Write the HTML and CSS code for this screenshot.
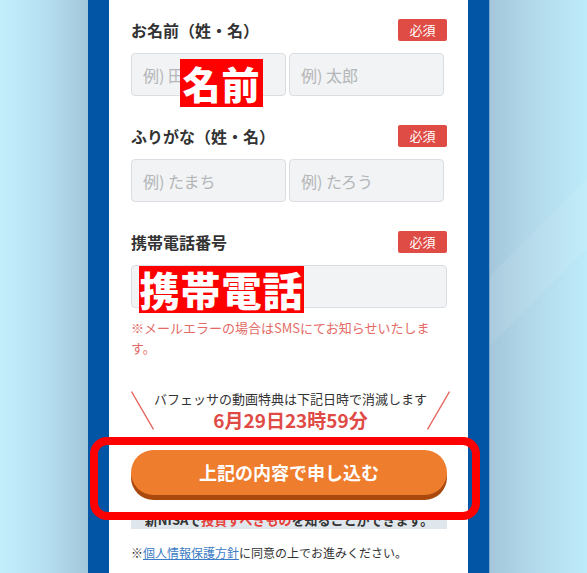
FILE: index.html
```html
<!DOCTYPE html>
<html lang="ja">
<head>
<meta charset="utf-8">
<title>申し込みフォーム</title>
<link rel="stylesheet" href="styles.css">
</head>
<body>
<div class="page">
  <main class="card">
    <div class="field">
      <div class="field-head"><span class="label">お名前（姓・名）</span><span class="badge">必須</span></div>
      <div class="name-row">
        <input class="input" type="text" placeholder="例) 田中">
        <input class="input" type="text" placeholder="例) 太郎">
        <span class="stamp stamp-name">名前</span>
      </div>
    </div>
    <div class="field">
      <div class="field-head"><span class="label">ふりがな（姓・名）</span><span class="badge">必須</span></div>
      <div class="name-row">
        <input class="input" type="text" placeholder="例) たまち">
        <input class="input" type="text" placeholder="例) たろう">
      </div>
    </div>
    <div class="field field-last">
      <div class="field-head"><span class="label">携帯電話番号</span><span class="badge">必須</span></div>
      <div class="phone-row">
        <input class="input input-full" type="tel">
        <span class="stamp stamp-phone">携帯電話</span>
      </div>
      <p class="note">※メールエラーの場合はSMSにてお知らせいたします。</p>
    </div>

    <div class="deadline">
      <svg class="slash" width="23" height="39" viewBox="0 0 23 39"><line x1="0.5" y1="0.5" x2="22.5" y2="38.5" stroke="#e4605a" stroke-width="1.3"/></svg>
      <div class="deadline-text">
        <p class="deadline-note">バフェッサの動画特典は下記日時で消滅します</p>
        <p class="deadline-date">6月29日23時59分</p>
      </div>
      <svg class="slash" width="23" height="39" viewBox="0 0 23 39"><line x1="22.5" y1="0.5" x2="0.5" y2="38.5" stroke="#e4605a" stroke-width="1.3"/></svg>
    </div>

    <div class="submit-wrap">
      <button class="submit" type="button">上記の内容で申し込む</button>
      <span class="annot"></span>
    </div>

    <p class="marker">新NISAで<span class="marker-red">投資すべきもの</span>を知ることができます。</p>

    <p class="privacy">※<a class="privacy-link" href="#">個人情報保護方針</a>に同意の上でお進みください。</p>
  </main>
</div>
</body>
</html>
```

FILE: styles.css
```css
* { box-sizing: border-box; }

html, body { height: 100%; }

body {
  margin: 0;
  overflow: hidden;
  font-family: "Noto Sans CJK JP", "Noto Sans", sans-serif;
  color: #333;
  background:
    linear-gradient(135deg, rgba(255,255,255,0) 0 66%, rgba(255,255,255,0.08) 66% 72%, rgba(255,255,255,0) 72%),
    linear-gradient(90deg, #c2eefc 0, #b6e0f2 45px, #a3c6da 88px, #a3c6da 489px, #b0d6e8 525px, #bdebfa 587px);
}

.page {
  display: flex;
  padding-left: 88px;
  min-height: 100%;
}

.card {
  width: 401px;
  min-height: 573px;
  background: #fff;
  border-left: 21px solid #0254a4;
  border-right: 21px solid #0254a4;
  box-shadow: 1px 0 0 #7fa9cf;
  padding: 19px 21px 30px 22px;
}

.field { margin-bottom: 29px; }
.field-last { margin-bottom: 0; }

.field-head {
  display: flex;
  justify-content: space-between;
  align-items: center;
  height: 22px;
  margin-bottom: 12px;
}

.label {
  font-size: 16px;
  font-weight: 700;
  line-height: 22px;
  color: #333;
}

.badge {
  width: 49px;
  height: 22px;
  line-height: 22px;
  text-align: center;
  font-size: 13px;
  color: #fff;
  background: #df4b45;
  border-radius: 2px;
}

.name-row {
  position: relative;
  display: grid;
  grid-template-columns: 155px 155px;
  gap: 3px;
}

.phone-row { position: relative; }

.input {
  display: block;
  width: 100%;
  height: 43px;
  margin: 0;
  padding: 0 11px;
  font-family: "Noto Sans CJK JP", "Noto Sans", sans-serif;
  font-size: 16px;
  color: #333;
  background: #f1f3f5;
  border: 1px solid #dadee2;
  border-radius: 4px;
  outline: none;
}

.input::placeholder { color: #b4b6b8; }

.stamp {
  position: absolute;
  background: #ff0000;
  color: #fff;
  font-weight: 900;
  text-align: center;
  white-space: nowrap;
}

.stamp-name {
  left: 49px;
  top: 6px;
  width: 83px;
  height: 48px;
  line-height: 48px;
  font-size: 38px;
  letter-spacing: 1px;
}

.stamp-phone {
  left: 8px;
  top: 1px;
  width: 165px;
  height: 47px;
  line-height: 47px;
  font-size: 40px;
  letter-spacing: 1px;
}

.note {
  margin: 10px 0 0;
  font-size: 13px;
  line-height: 20px;
  color: #e36a66;
}

.deadline {
  display: grid;
  grid-template-columns: 23px 1fr 23px;
  align-items: end;
  margin-top: 31px;
}

.slash { display: block; margin-bottom: 1px; }

.deadline-text {
  text-align: center;
  white-space: nowrap;
}

.deadline-note {
  margin: 0;
  font-size: 13px;
  line-height: 20px;
  color: #333;
}

.deadline-date {
  margin: 0;
  font-size: 19px;
  font-weight: 700;
  line-height: 22px;
  color: #e04a45;
}

.submit-wrap {
  position: relative;
  margin-top: 19px;
}

.submit {
  display: block;
  width: 100%;
  height: 45px;
  border: 0;
  border-radius: 23px;
  background: #ef7d2e;
  box-shadow: 0 5px 0 #a9490d;
  color: #fff;
  font-family: "Noto Sans CJK JP", "Noto Sans", sans-serif;
  font-size: 18px;
  font-weight: 700;
  line-height: 45px;
  padding: 0;
}

.annot {
  position: absolute;
  left: -41px;
  top: -13px;
  width: 390px;
  height: 83px;
  border: 8px solid #ff0000;
  border-radius: 17px;
}

.marker {
  margin: 16px 0 0;
  font-size: 13px;
  font-weight: 700;
  line-height: 18px;
  text-align: center;
  color: #333;
  background: linear-gradient(rgba(223,230,236,0) 40%, #dfe6ec 40%);
}

.marker-red { color: #e8413c; }

.privacy {
  margin: 15px 0 0;
  font-size: 12px;
  line-height: 18px;
  color: #333;
}

.privacy-link {
  color: #3b7cc4;
  text-decoration: underline;
}
```
